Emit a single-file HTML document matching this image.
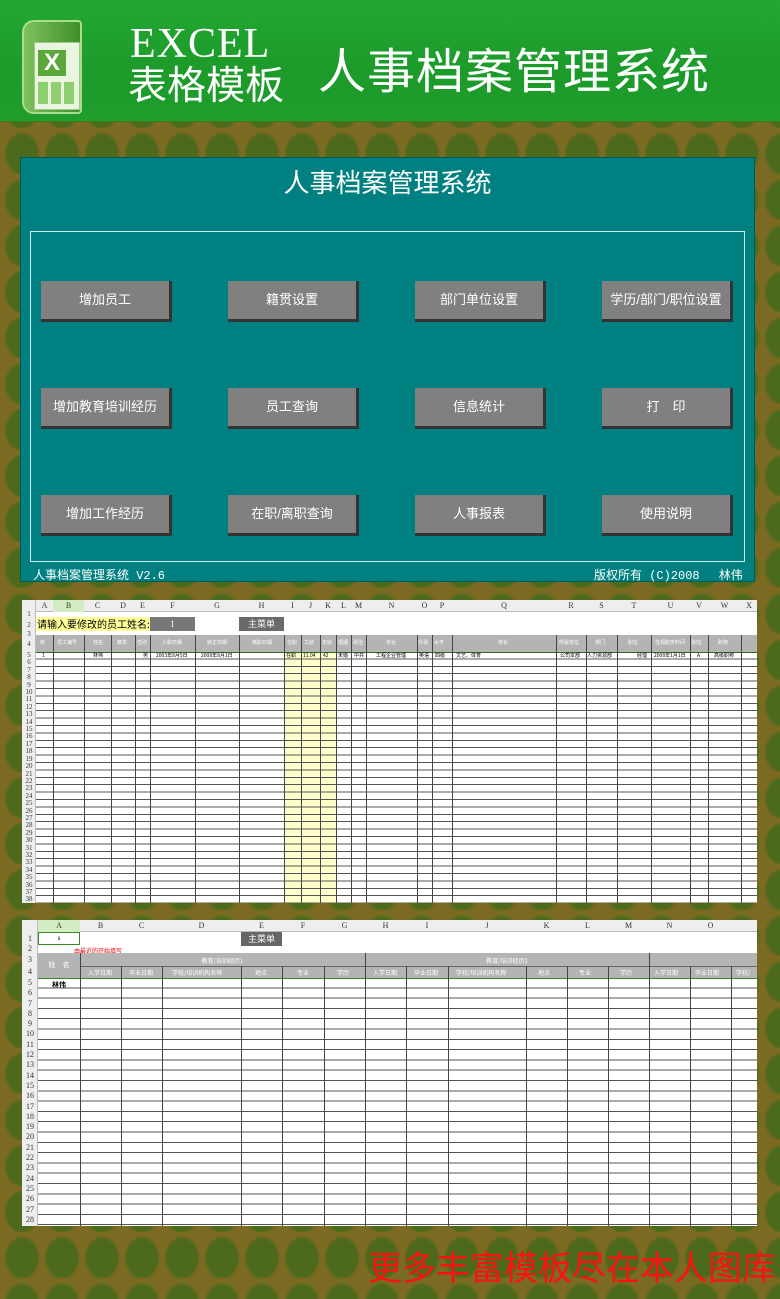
<!DOCTYPE html>
<html><head><meta charset="utf-8"><style>
*{margin:0;padding:0;box-sizing:border-box}
body{width:780px;height:1299px;position:relative;overflow:hidden;font-family:"Liberation Sans","Noto Sans CJK SC",sans-serif;
background-color:#7a6a22;
background-image:radial-gradient(ellipse 18px 22px at 22px 26px,#4d6a1c 0,#4d6a1c 85%,transparent 100%);
background-size:40px 46px;background-position:0 128px}
.hdr{position:absolute;left:0;top:0;width:780px;height:122px;background:linear-gradient(180deg,#23a833,#1c9a2a 60%,#209e2c);border-bottom:1px solid #3b7a1e}
.abs{position:absolute}
.panel{position:absolute;left:20px;top:157px;width:735px;height:425px;background:#008080;border:1px solid #005a5a}
.btn{position:absolute;width:131px;height:41px;background:#808080;border-right:3px solid #333;border-bottom:3px solid #333;color:#fff;font-size:13px;text-align:center;line-height:38px}
.sheet{position:absolute;left:22px;width:735px;background:#fff;overflow:hidden;font-family:"Liberation Serif","Noto Sans CJK SC",serif}
.v{position:absolute;width:1px;background:#444}
.col{position:absolute;top:0;height:12px;font-size:8px;color:#333;text-align:center;line-height:12px}
.rn{position:absolute;left:0;width:14px;font-size:7px;color:#333;text-align:center}
.h4{position:absolute;top:39px;font-size:5px;color:#fff;font-family:'Noto Sans CJK SC',sans-serif}
</style></head><body>
<div class="hdr"></div>
<div class="abs" style="left:22px;top:20px;width:60px;height:94px;background:linear-gradient(90deg,#7fc25e,#3e8f2a);border-radius:12px 4px 4px 12px;border:2px solid #a9dc8c"></div>
<div class="abs" style="left:34px;top:42px;width:46px;height:68px;background:#eaf5e0;border:1px solid #9cc98a"></div>
<div class="abs" style="left:38px;top:50px;width:28px;height:26px;background:#5aa83a;color:#fff;font-weight:bold;font-size:24px;line-height:26px;text-align:center">X</div>
<div class="abs" style="left:38px;top:82px;width:38px;height:22px;background:repeating-linear-gradient(90deg,#8fcf72 0 10px,#eaf5e0 10px 13px)"></div>
<div class="abs" style="left:130px;top:22px;font-family:'Liberation Serif',serif;font-size:42px;color:#fff;line-height:44px;letter-spacing:1px">EXCEL</div>
<div class="abs" style="left:128px;top:64px;font-size:39px;color:#fff;line-height:46px">表格模板</div>
<div class="abs" style="left:318px;top:46px;font-size:48px;color:#fff;line-height:54px;letter-spacing:1px">人事档案管理系统</div>

<div class="panel">
<div class="abs" style="left:0;width:733px;top:5px;text-align:center;color:#fff;font-size:26px">人事档案管理系统</div>
<div class="abs" style="left:9px;top:73px;width:715px;height:331px;border:1px solid #cfeeee"></div>
<div class="btn" style="left:20px;top:123px">增加员工</div>
<div class="btn" style="left:207px;top:123px">籍贯设置</div>
<div class="btn" style="left:394px;top:123px">部门单位设置</div>
<div class="btn" style="left:581px;top:123px">学历/部门/职位设置</div>
<div class="btn" style="left:20px;top:230px">增加教育培训经历</div>
<div class="btn" style="left:207px;top:230px">员工查询</div>
<div class="btn" style="left:394px;top:230px">信息统计</div>
<div class="btn" style="left:581px;top:230px">打　印</div>
<div class="btn" style="left:20px;top:337px">增加工作经历</div>
<div class="btn" style="left:207px;top:337px">在职/离职查询</div>
<div class="btn" style="left:394px;top:337px">人事报表</div>
<div class="btn" style="left:581px;top:337px">使用说明</div>
<div class="abs" style="left:12px;top:408px;color:#fff;font-size:12px;font-family:'Liberation Mono','Noto Sans CJK SC',monospace">人事档案管理系统 V2.6</div>
<div class="abs" style="left:573px;top:408px;color:#fff;font-size:12px;font-family:'Liberation Mono','Noto Sans CJK SC',monospace">版权所有 (C)2008　 林伟</div>
</div>

<div class="sheet" style="top:600px;height:303px">
<div class="abs" style="left:0;top:0;width:735px;height:12px;background:#eeeeee;border-bottom:1px solid #bbb"></div>
<div class="abs" style="left:0;top:0;width:14px;height:303px;background:#eeeeee;border-right:1px solid #bbb"></div>
<div class="abs" style="left:31px;top:0;width:31px;height:12px;background:#d4ecc4"></div>
<div class="col" style="left:14px;width:17px">A</div><div class="col" style="left:31px;width:31px">B</div><div class="col" style="left:62px;width:27px">C</div><div class="col" style="left:89px;width:24px">D</div><div class="col" style="left:113px;width:15px">E</div><div class="col" style="left:128px;width:45px">F</div><div class="col" style="left:173px;width:44px">G</div><div class="col" style="left:217px;width:45px">H</div><div class="col" style="left:262px;width:17px">I</div><div class="col" style="left:279px;width:19px">J</div><div class="col" style="left:298px;width:16px">K</div><div class="col" style="left:314px;width:15px">L</div><div class="col" style="left:329px;width:15px">M</div><div class="col" style="left:344px;width:51px">N</div><div class="col" style="left:395px;width:15px">O</div><div class="col" style="left:410px;width:20px">P</div><div class="col" style="left:430px;width:104px">Q</div><div class="col" style="left:534px;width:30px">R</div><div class="col" style="left:564px;width:31px">S</div><div class="col" style="left:595px;width:34px">T</div><div class="col" style="left:629px;width:39px">U</div><div class="col" style="left:668px;width:18px">V</div><div class="col" style="left:686px;width:33px">W</div><div class="col" style="left:719px;width:16px">X</div>
<div class="abs" style="left:15px;top:17px;width:113px;height:14px;background:#ffff99;font-size:10px;line-height:14px;font-family:'Noto Sans CJK SC',sans-serif;color:#000">请输入要修改的员工姓名:</div>
<div class="abs" style="left:128px;top:17px;width:45px;height:14px;background:#777;color:#fff;font-size:9px;text-align:center;line-height:14px">1</div>
<div class="abs" style="left:217px;top:17px;width:45px;height:14px;background:#6a6a6a;color:#fff;font-size:9px;text-align:center;line-height:14px;font-family:'Noto Sans CJK SC',sans-serif">主菜单</div>
<div class="abs" style="left:14px;top:35px;width:721px;height:17px;background:#b4b4b4"></div>
<div class="h4" style="left:18px">序</div><div class="h4" style="left:35px">员工编号</div><div class="h4" style="left:71px">姓名</div><div class="h4" style="left:95px">籍贯</div><div class="h4" style="left:115px">性别</div><div class="h4" style="left:140px">入职日期</div><div class="h4" style="left:185px">转正日期</div><div class="h4" style="left:230px">离职日期</div><div class="h4" style="left:265px">在职</div><div class="h4" style="left:282px">工龄</div><div class="h4" style="left:300px">年龄</div><div class="h4" style="left:316px">婚姻</div><div class="h4" style="left:331px">政治</div><div class="h4" style="left:364px">专业</div><div class="h4" style="left:396px">外语</div><div class="h4" style="left:412px">水平</div><div class="h4" style="left:476px">特长</div><div class="h4" style="left:537px">所属单位</div><div class="h4" style="left:573px">部门</div><div class="h4" style="left:606px">职位</div><div class="h4" style="left:633px">任现职务时间</div><div class="h4" style="left:670px">职位</div><div class="h4" style="left:696px">职称</div>
<div class="abs" style="left:262px;top:52px;width:52px;height:251px;background:#ffffcc"></div>
<div class="abs" style="left:14px;top:52px;width:721px;height:251px;background:repeating-linear-gradient(180deg,transparent 0 6.4px,#555 6.4px 7.4px)"></div>
<div class="abs" style="left:14px;top:52px;width:721px;height:1px;background:#2a6a1a"></div>
<div class="abs" style="left:14px;top:53px;width:721px;font-size:5px;color:#000;line-height:6px;font-family:'Noto Sans CJK SC',sans-serif"><span class="abs" style="left:6px">1</span><span class="abs" style="left:57px">林伟</span><span class="abs" style="left:107px">男</span><span class="abs" style="left:120px">2003年8月5日</span><span class="abs" style="left:165px">2008年8月1日</span><span class="abs" style="left:250px">在职</span><span class="abs" style="left:267px">11.04</span><span class="abs" style="left:287px">42</span><span class="abs" style="left:302px">未婚</span><span class="abs" style="left:318px">中共</span><span class="abs" style="left:340px">工程企业管理</span><span class="abs" style="left:383px">英语</span><span class="abs" style="left:399px">四级</span><span class="abs" style="left:420px">文艺、体育</span><span class="abs" style="left:524px">公司本部</span><span class="abs" style="left:551px">人力资源部</span><span class="abs" style="left:601px">经理</span><span class="abs" style="left:618px">2008年1月1日</span><span class="abs" style="left:661px">A</span><span class="abs" style="left:678px">高级职称</span></div>
<div class="v" style="left:31px;top:35px;height:268px"></div><div class="v" style="left:62px;top:35px;height:268px"></div><div class="v" style="left:89px;top:35px;height:268px"></div><div class="v" style="left:113px;top:35px;height:268px"></div><div class="v" style="left:128px;top:35px;height:268px"></div><div class="v" style="left:173px;top:35px;height:268px"></div><div class="v" style="left:217px;top:35px;height:268px"></div><div class="v" style="left:262px;top:35px;height:268px"></div><div class="v" style="left:279px;top:35px;height:268px"></div><div class="v" style="left:298px;top:35px;height:268px"></div><div class="v" style="left:314px;top:35px;height:268px"></div><div class="v" style="left:329px;top:35px;height:268px"></div><div class="v" style="left:344px;top:35px;height:268px"></div><div class="v" style="left:395px;top:35px;height:268px"></div><div class="v" style="left:410px;top:35px;height:268px"></div><div class="v" style="left:430px;top:35px;height:268px"></div><div class="v" style="left:534px;top:35px;height:268px"></div><div class="v" style="left:564px;top:35px;height:268px"></div><div class="v" style="left:595px;top:35px;height:268px"></div><div class="v" style="left:629px;top:35px;height:268px"></div><div class="v" style="left:668px;top:35px;height:268px"></div><div class="v" style="left:686px;top:35px;height:268px"></div><div class="v" style="left:719px;top:35px;height:268px"></div>
<div class="rn" style="top:12px;line-height:5px">1</div><div class="rn" style="top:18px;line-height:14px">2</div><div class="rn" style="top:32px;line-height:4px">3</div><div class="rn" style="top:36px;line-height:16px">4</div>
<div class="rn" style="top:52px;line-height:7.4px">5<br>6<br>7<br>8<br>9<br>10<br>11<br>12<br>13<br>14<br>15<br>16<br>17<br>18<br>19<br>20<br>21<br>22<br>23<br>24<br>25<br>26<br>27<br>28<br>29<br>30<br>31<br>32<br>33<br>34<br>35<br>36<br>37<br>38</div>
</div>

<div class="sheet" style="top:920px;height:306px">
<div class="abs" style="left:0;top:0;width:735px;height:12px;background:#eeeeee;border-bottom:1px solid #bbb"></div>
<div class="abs" style="left:0;top:0;width:16px;height:306px;background:#eeeeee;border-right:1px solid #bbb"></div>
<div class="abs" style="left:16px;top:0;width:42px;height:12px;background:#d4ecc4"></div>
<div class="col" style="left:16px;width:42px">A</div><div class="col" style="left:58px;width:41px">B</div><div class="col" style="left:99px;width:41px">C</div><div class="col" style="left:140px;width:79px">D</div><div class="col" style="left:219px;width:41px">E</div><div class="col" style="left:260px;width:42px">F</div><div class="col" style="left:302px;width:41px">G</div><div class="col" style="left:343px;width:41px">H</div><div class="col" style="left:384px;width:42px">I</div><div class="col" style="left:426px;width:78px">J</div><div class="col" style="left:504px;width:41px">K</div><div class="col" style="left:545px;width:41px">L</div><div class="col" style="left:586px;width:41px">M</div><div class="col" style="left:627px;width:41px">N</div><div class="col" style="left:668px;width:41px">O</div>
<div class="abs" style="left:16px;top:12px;width:42px;height:13px;border:1px solid #3a8a2a;font-size:7px;text-align:center;line-height:11px">s</div>
<div class="abs" style="left:219px;top:12px;width:41px;height:14px;background:#666;color:#fff;font-size:9px;text-align:center;line-height:14px;font-family:'Noto Sans CJK SC',sans-serif">主菜单</div>
<div class="abs" style="left:52px;top:26px;font-size:6px;color:#e00;font-family:'Noto Sans CJK SC',sans-serif">由最近的开始填写</div>
<div class="abs" style="left:16px;top:33px;width:719px;height:25px;background:#b4b4b4"></div>
<div class="abs" style="left:16px;top:40px;width:42px;font-size:7px;color:#fff;text-align:center;font-family:'Noto Sans CJK SC',sans-serif">姓　名</div>
<div class="abs" style="left:58px;top:36px;width:285px;font-size:6px;color:#fff;text-align:center;font-family:'Noto Sans CJK SC',sans-serif">教育/培训经历1</div>
<div class="abs" style="left:343px;top:36px;width:284px;font-size:6px;color:#fff;text-align:center;font-family:'Noto Sans CJK SC',sans-serif">教育/培训经历2</div>
<div class="abs" style="left:58px;top:46px;width:677px;height:1px;background:#666"></div>
<div class="abs" style="left:58px;top:48px;width:677px;font-size:6px;color:#fff;font-family:'Noto Sans CJK SC',sans-serif"><span class="abs" style="left:8px">入学日期</span><span class="abs" style="left:49px">毕业日期</span><span class="abs" style="left:92px">学校/培训机构名称</span><span class="abs" style="left:175px">地点</span><span class="abs" style="left:217px">专业</span><span class="abs" style="left:257px">学历</span><span class="abs" style="left:293px">入学日期</span><span class="abs" style="left:334px">毕业日期</span><span class="abs" style="left:376px">学校/培训机构名称</span><span class="abs" style="left:458px">地点</span><span class="abs" style="left:499px">专业</span><span class="abs" style="left:540px">学历</span><span class="abs" style="left:574px">入学日期</span><span class="abs" style="left:615px">毕业日期</span><span class="abs" style="left:656px">学校/</span></div>
<div class="abs" style="left:16px;top:58px;width:719px;height:248px;background:repeating-linear-gradient(180deg,transparent 0 9.3px,#555 9.3px 10.3px)"></div>
<div class="abs" style="left:16px;top:58px;width:719px;height:1px;background:#3a8a2a"></div>
<div class="abs" style="left:16px;top:60px;width:42px;font-size:7px;text-align:center;font-weight:bold;font-family:'Noto Sans CJK SC',sans-serif">林伟</div>
<div class="v" style="left:58px;top:33px;height:273px"></div><div class="v" style="left:99px;top:46px;height:260px"></div><div class="v" style="left:140px;top:46px;height:260px"></div><div class="v" style="left:219px;top:46px;height:260px"></div><div class="v" style="left:260px;top:46px;height:260px"></div><div class="v" style="left:302px;top:46px;height:260px"></div><div class="v" style="left:343px;top:33px;height:273px"></div><div class="v" style="left:384px;top:46px;height:260px"></div><div class="v" style="left:426px;top:46px;height:260px"></div><div class="v" style="left:504px;top:46px;height:260px"></div><div class="v" style="left:545px;top:46px;height:260px"></div><div class="v" style="left:586px;top:46px;height:260px"></div><div class="v" style="left:627px;top:33px;height:273px"></div><div class="v" style="left:668px;top:46px;height:260px"></div><div class="v" style="left:709px;top:46px;height:260px"></div>
<div class="rn" style="width:16px;top:12px;line-height:13px;font-size:8px">1</div><div class="rn" style="width:16px;top:25px;line-height:8px;font-size:8px">2</div><div class="rn" style="width:16px;top:33px;line-height:13px;font-size:8px">3</div><div class="rn" style="width:16px;top:46px;line-height:12px;font-size:8px">4</div>
<div class="rn" style="width:16px;top:58px;line-height:10.3px;font-size:8px">5<br>6<br>7<br>8<br>9<br>10<br>11<br>12<br>13<br>14<br>15<br>16<br>17<br>18<br>19<br>20<br>21<br>22<br>23<br>24<br>25<br>26<br>27<br>28</div>
</div>

<div class="abs" style="left:368px;top:1244px;font-size:34px;color:#ff1010;line-height:44px;white-space:nowrap;font-family:'Noto Sans CJK SC',sans-serif">更多丰富模板尽在本人图库</div>
</body></html>
